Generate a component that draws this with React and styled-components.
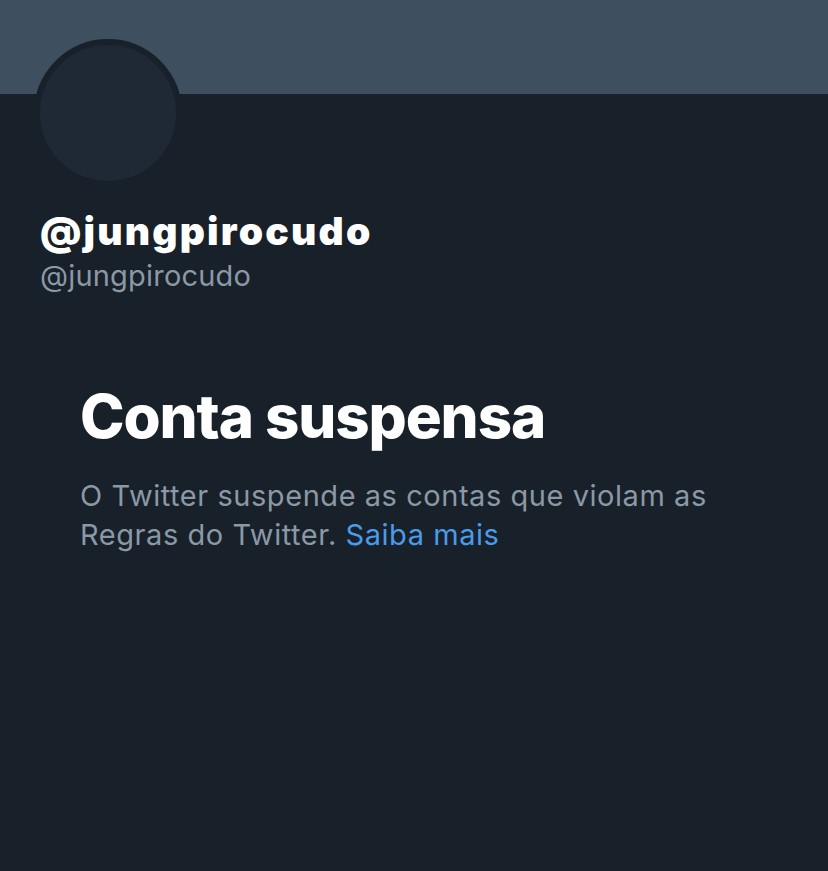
import React from 'react'
import styled, { createGlobalStyle } from 'styled-components'

const GlobalStyle = createGlobalStyle`
    html, body {
        margin: 0;
        padding: 0;
        background-color: #18202a;
    }
    body {
        font-family: Inter, "Liberation Sans", Arial, sans-serif;
        -webkit-font-smoothing: antialiased;
    }
`

const Page = styled.div`
    width: 828px;
    min-height: 871px;
    background-color: #18202a;
    display: flex;
    flex-direction: column;
`

const Banner = styled.div`
    height: 94px;
    background-color: #3e4f60;
`

const Header = styled.div`
    display: flex;
    flex-direction: column;
    padding: 0 34px;
`

const Avatar = styled.div`
    width: 136px;
    height: 136px;
    margin-top: -55px;
    border-radius: 50%;
    border: 6px solid #18202a;
    background-color: #1f2835;
`

const Names = styled.div`
    display: flex;
    flex-direction: column;
    padding: 21px 6px 0;
`

const DisplayName = styled.div`
    font-size: 39px;
    font-weight: 900;
    line-height: 46px;
    color: #ffffff;
    letter-spacing: 2.2px;
`

const Handle = styled.div`
    font-size: 29px;
    font-weight: 400;
    line-height: 44px;
    color: #8b98a5;
    letter-spacing: 0.2px;
`

const Notice = styled.div`
    display: flex;
    flex-direction: column;
    gap: 24px;
    padding: 82px 80px 0;
`

const Title = styled.h1`
    margin: 0;
    font-size: 60px;
    font-weight: 800;
    line-height: 72px;
    color: #ffffff;
    letter-spacing: -1.1px;
`

const Text = styled.p`
    margin: 0;
    max-width: 650px;
    font-size: 29px;
    line-height: 39px;
    color: #8b98a5;
    letter-spacing: 0.55px;
`

const Link = styled.a`
    color: #4a9be8;
    text-decoration: none;
    cursor: pointer;
`

const App = () => {
    return (
        <Page>
            <GlobalStyle />
            <Banner />
            <Header>
                <Avatar />
                <Names>
                    <DisplayName>@jungpirocudo</DisplayName>
                    <Handle>@jungpirocudo</Handle>
                </Names>
            </Header>
            <Notice>
                <Title>Conta suspensa</Title>
                <Text>
                    O Twitter suspende as contas que violam as Regras do Twitter.{' '}
                    <Link>Saiba mais</Link>
                </Text>
            </Notice>
        </Page>
    )
}

export default App
